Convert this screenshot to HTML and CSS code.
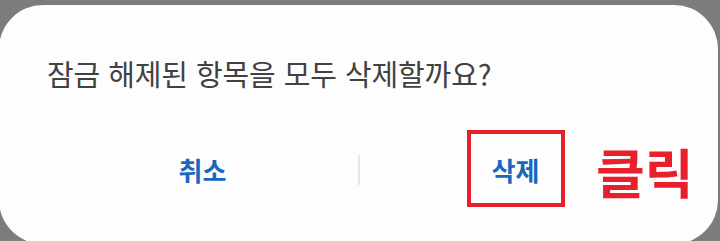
FILE: index.html
```html
<!DOCTYPE html>
<html lang="ko">
<head>
<meta charset="utf-8">
<link rel="stylesheet" href="styles.css">
</head>
<body>
<div class="frame">
  <div class="dialog">
    <p class="title">잠금 해제된 항목을 모두 삭제할까요?</p>
    <div class="actions">
      <div class="btn"><span class="label">취소</span></div>
      <div class="divider"></div>
      <div class="btn"><span class="label">삭제<span class="highlight"></span></span></div>
    </div>
    <span class="note">클릭</span>
  </div>
</div>
</body>
</html>
```
FILE: styles.css
```css
html, body {
  margin: 0;
  padding: 0;
  background: #7c7c7c;
  font-family: "Noto Sans CJK KR", "Noto Sans", sans-serif;
}
.frame {
  width: 720px;
  height: 241px;
  overflow: hidden;
  padding-top: 5px;
  box-sizing: border-box;
}
.dialog {
  position: relative;
  margin-left: -1px;
  width: 719px;
  height: 239px;
  box-sizing: border-box;
  background: #fdfdfd;
  border-radius: 44px;
  padding: 48px 47px 0 48px;
  display: flex;
  flex-direction: column;
}
.title {
  margin: 0;
  font-size: 29px;
  line-height: 40px;
  color: #414141;
  letter-spacing: -0.1px;
}
.actions {
  margin-top: 47px;
  height: 60px;
  display: flex;
  align-items: center;
}
.btn {
  flex: 1;
  text-align: center;
  font-size: 26px;
  font-weight: 700;
  color: #1767bd;
  line-height: 60px;
}
.label {
  position: relative;
  display: inline-block;
}
.divider {
  width: 2px;
  height: 30px;
  background: #e6e6e6;
}
.highlight {
  position: absolute;
  left: -25px;
  top: -10px;
  width: 98px;
  height: 77px;
  box-sizing: border-box;
  border: 4px solid #e8202c;
}
.note {
  position: absolute;
  left: 597px;
  top: 136px;
  font-size: 53px;
  font-weight: 700;
  color: #e8202c;
  line-height: 60px;
}
```
